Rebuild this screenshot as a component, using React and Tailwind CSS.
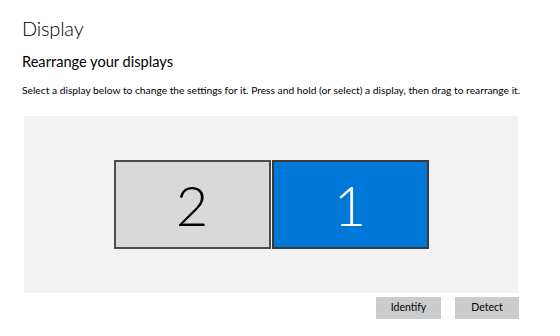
const App = () => {
  return (
    <div className="w-[560px] h-[336px] bg-white overflow-hidden" style={{ fontFamily: 'Lato, "Noto Sans", sans-serif' }}>
      <div className="pl-[22px] pt-[14px]">
        <h1 className="text-[20px] leading-[28px] font-light text-black tracking-[-0.2px]">Display</h1>
        <h2 className="mt-[10px] text-[14.6px] leading-[20px] text-black">Rearrange your displays</h2>
        <p className="mt-[10px] text-[10.25px] leading-[16px] text-black whitespace-nowrap">
          Select a display below to change the settings for it. Press and hold (or select) a display, then drag to rearrange it.
        </p>
      </div>

      {/* Arrangement canvas */}
      <div className="ml-[24px] mt-[18px] w-[494px] h-[177px] bg-[#f2f2f2] flex items-center justify-center">
        <div className="flex gap-[1px]">
          <div className="w-[157px] h-[89px] bg-[#d9d9d9] border-2 border-[#4d4d4d] flex items-center justify-center">
            <span className="text-[56px] font-light text-black leading-none">2</span>
          </div>
          <div className="w-[157px] h-[89px] bg-[#0078d7] border-2 border-[#3a3a3a] flex items-center justify-center">
            <span className="text-[56px] font-light text-white leading-none">1</span>
          </div>
        </div>
      </div>

      <div className="flex justify-end gap-[14px] w-[519px] mt-[4px]">
        <button className="w-[65px] h-[22px] bg-[#cccccc] text-[10.5px] text-black">Identify</button>
        <button className="w-[64px] h-[22px] bg-[#cccccc] text-[10.5px] text-black">Detect</button>
      </div>
    </div>
  );
};

export default App;
